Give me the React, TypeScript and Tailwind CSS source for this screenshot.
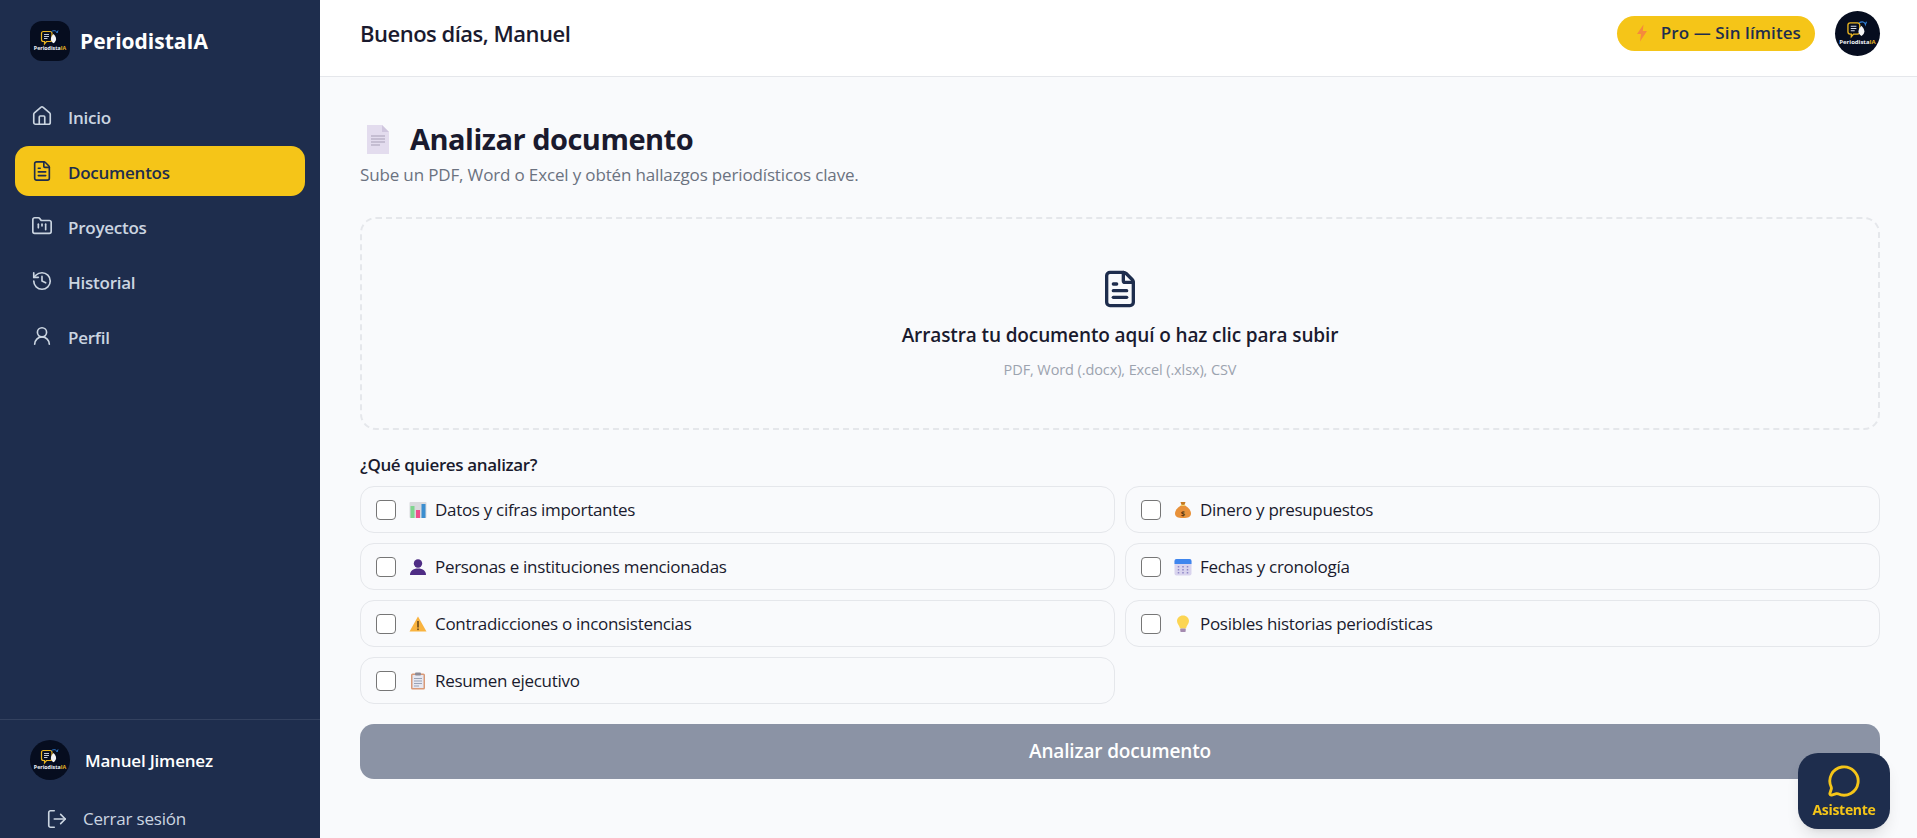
import React from 'react';
import { House, FileText, FolderKanban, History, UserRound, LogOut, MessageCircle } from 'lucide-react';

const navItems = [
  { label: 'Inicio', icon: House },
  { label: 'Documentos', icon: FileText, active: true },
  { label: 'Proyectos', icon: FolderKanban },
  { label: 'Historial', icon: History },
  { label: 'Perfil', icon: UserRound },
];

function Logo({ className }: { className: string }) {
  return (
    <svg viewBox="0 0 40 40" className={className}>
      <path d="M13.500 10.500h6.500a2 2 0 0 1 2 2v6a2 2 0 0 1-2 2h-3.500l-2 2.300v-2.300h-1a2 2 0 0 1-2-2v-6a2 2 0 0 1 2-2z" fill="none" stroke="#e9b521" strokeWidth="1.200" />
      <path d="M14 13.500h5M14 15.500h5M14 17.500h3.500" stroke="#d8dee9" strokeWidth="0.900" />
      <path d="M23.500 13c1.600 1.800 2.600 3.300 2.600 5s-1 3.200-2.600 4.300c-1.600-1.100-2.600-2.600-2.600-4.300s1-3.200 2.600-5z" fill="#f3f4f6" />
      <path d="M21.500 10.500c2.500-1.500 5-1 5.500 1.500l1-2.500" fill="none" stroke="#2f7fd6" strokeWidth="1" />
      <text x="20" y="29" textAnchor="middle" fontSize="5.300" fontWeight="700" fill="#f1f5f9" fontFamily="Open Sans, sans-serif">
        Periodista<tspan fill="#e9b521">IA</tspan>
      </text>
    </svg>
  );
}

function Chart() {
  return (
    <svg viewBox="0 0 18 18" className="w-[18px] h-[18px] shrink-0">
      <rect x="0.500" y="1" width="17" height="16" rx="1" fill="#d9d9dd" />
      <rect x="1.500" y="5" width="4" height="12" fill="#7fd58f" />
      <rect x="7" y="9" width="4" height="8" fill="#ee4f8b" />
      <rect x="12.500" y="3" width="4" height="14" fill="#3b8ed0" />
    </svg>
  );
}

function Bust() {
  return (
    <svg viewBox="0 0 18 18" className="w-[18px] h-[18px] shrink-0">
      <circle cx="9" cy="5.500" r="4.200" fill="#4f2d85" />
      <path d="M1 17c0-4 3-6.500 8-6.500s8 2.500 8 6.500z" fill="#4f2d85" />
    </svg>
  );
}

function Warning() {
  return (
    <svg viewBox="0 0 18 18" className="w-[18px] h-[18px] shrink-0">
      <path d="M9 1.500 17.500 16.500H0.500z" fill="#f9b33f" strokeLinejoin="round" />
      <rect x="8.200" y="6" width="1.600" height="6.500" fill="#6b4a1a" />
      <rect x="8.200" y="13.500" width="1.600" height="1.600" fill="#6b4a1a" />
    </svg>
  );
}

function Clipboard() {
  return (
    <svg viewBox="0 0 18 18" className="w-[18px] h-[18px] shrink-0">
      <rect x="2" y="1.500" width="14" height="16" rx="1.500" fill="#d99a78" />
      <rect x="3.500" y="3" width="11" height="13" fill="#e6e8f2" />
      <rect x="6" y="0.500" width="6" height="3" rx="1" fill="#8e8a94" />
      <path d="M5 6.500h8M5 9h8M5 11.500h8M5 14h5" stroke="#9aa3b5" strokeWidth="1" />
    </svg>
  );
}

function MoneyBag() {
  return (
    <svg viewBox="0 0 18 18" className="w-[18px] h-[18px] shrink-0">
      <path d="M6.500 1h5l-1.200 3.500H7.700z" fill="#c67a22" />
      <path d="M7 4.500h4c3.500 2 6 5 6 8 0 3.200-2.500 4.500-8 4.500s-8-1.300-8-4.500c0-3 2.500-6 6-8z" fill="#e8913a" />
      <rect x="6.800" y="3.800" width="4.400" height="1.200" fill="#f6d06a" />
      <text x="9" y="14.500" textAnchor="middle" fontSize="7.500" fontWeight="700" fill="#5f3a12" fontFamily="Open Sans, sans-serif">$</text>
    </svg>
  );
}

function CalendarEmoji() {
  return (
    <svg viewBox="0 0 18 18" className="w-[18px] h-[18px] shrink-0">
      <rect x="0.500" y="1" width="17" height="16.500" rx="2" fill="#d9d4ee" />
      <path d="M0.500 6V3a2 2 0 0 1 2-2h13a2 2 0 0 1 2 2v3z" fill="#3f86ee" />
      <path d="M4.500 8v8M9 8v8M13.500 8v8" stroke="#8f87c8" strokeWidth="1.500" strokeDasharray="1.500 1.500" />
    </svg>
  );
}

function Bulb() {
  return (
    <svg viewBox="0 0 18 18" className="w-[18px] h-[18px] shrink-0">
      <path d="M9 0.500c3.600 0 6 2.500 6 5.500 0 3-2.600 4.500-3 7.500H6c-.4-3-3-4.500-3-7.500 0-3 2.400-5.500 6-5.500z" fill="#fcd553" />
      <rect x="6.300" y="13.500" width="5.400" height="3.500" rx="0.800" fill="#a58bb0" />
    </svg>
  );
}

function Bolt() {
  return (
    <svg viewBox="0 0 12 18" className="w-[12px] h-[18px] shrink-0">
      <path d="M7.500 0.500 1 10h4l-1 7.500L11 7H6.800z" fill="#f58a3c" />
    </svg>
  );
}

function PageEmoji() {
  return (
    <svg viewBox="0 0 22 29" className="w-[22px] h-[29px] shrink-0">
      <path d="M0 0h15l7 7v22H0z" fill="#e3dcee" />
      <path d="M15 0l7 7h-7z" fill="#cfc6de" />
      <path d="M4 11h14M4 14h14M4 17h14M4 20h9" stroke="#a79fb6" strokeWidth="1" />
    </svg>
  );
}

const options = [
  { label: 'Datos y cifras importantes', icon: <Chart /> },
  { label: 'Dinero y presupuestos', icon: <MoneyBag /> },
  { label: 'Personas e instituciones mencionadas', icon: <Bust /> },
  { label: 'Fechas y cronología', icon: <CalendarEmoji /> },
  { label: 'Contradicciones o inconsistencias', icon: <Warning /> },
  { label: 'Posibles historias periodísticas', icon: <Bulb /> },
  { label: 'Resumen ejecutivo', icon: <Clipboard /> },
];

export default function App() {
  return (
    <div className="flex h-[838px] overflow-hidden bg-[#f9fafc] font-['Open_Sans',sans-serif] text-[#1a1a2e]">
      <aside className="w-[320px] shrink-0 flex flex-col bg-[#1e2d4d]">
        <div className="flex items-center gap-[10px] pl-[30px] h-[82px]">
          <div className="w-[40px] h-[40px] rounded-[12px] bg-[#060d1f] overflow-hidden">
            <Logo className="w-[40px] h-[40px]" />
          </div>
          <span className="pt-[2px] text-[21px] font-bold text-white">PeriodistaIA</span>
        </div>

        <nav className="flex flex-col gap-[5px] px-[15px] pt-[9px]">
          {navItems.map(({ label, icon: Icon, active }) => (
            <div
              key={label}
              className={
                active
                  ? 'flex items-center gap-[15px] h-[50px] pl-[16px] rounded-[14px] bg-[#f5c518] text-[#1e2d4d]'
                  : 'flex items-center gap-[15px] h-[50px] pl-[16px] rounded-[14px] text-[#cbd5e1]'
              }
            >
              <Icon size={22} strokeWidth={1.800} />
              <span className="pt-[3px] text-[17px] font-semibold tracking-[-0.25px]">{label}</span>
            </div>
          ))}
        </nav>

        <div className="mt-auto border-t border-[#33415f] pl-[30px] pt-[20px] h-[119px]">
          <div className="flex items-center gap-[15px]">
            <div className="w-[40px] h-[40px] rounded-full bg-[#060d1f] overflow-hidden">
              <Logo className="w-[40px] h-[40px]" />
            </div>
            <span className="pt-[2px] text-[17px] font-semibold tracking-[-0.2px] text-white">Manuel Jimenez</span>
          </div>
          <div className="flex items-center gap-[15px] pl-[16px] mt-[26px] text-[#cbd5e1]">
            <LogOut size={22} strokeWidth={1.800} />
            <span className="text-[17px] font-medium tracking-[-0.2px]">Cerrar sesión</span>
          </div>
        </div>
      </aside>

      <div className="flex-1 flex flex-col min-w-0">
        <header className="h-[77px] shrink-0 flex items-center justify-between pl-[40px] pr-[37px] pb-[10px] bg-white border-b border-[#e5e7eb]">
          <h2 className="text-[22px] font-semibold tracking-[-0.5px]">Buenos días, Manuel</h2>
          <div className="flex items-center gap-[20px]">
            <div className="flex items-center gap-[13px] h-[35px] pl-[19px] pr-[14px] rounded-full bg-[#f5c518] text-[#1e2d4d]">
              <Bolt />
              <span className="text-[17px] font-semibold tracking-[0.1px]">Pro — Sin límites</span>
            </div>
            <div className="w-[45px] h-[45px] rounded-full bg-[#060d1f] overflow-hidden">
              <Logo className="w-[45px] h-[45px]" />
            </div>
          </div>
        </header>

        <main className="flex-1 pl-[40px] pr-[37px] pt-[47px]">
          <div className="flex items-center gap-[21px] pl-[7px] h-[30px]">
            <PageEmoji />
            <h1 className="text-[29px] font-bold tracking-[-0.5px]">Analizar documento</h1>
          </div>
          <p className="mt-[9px] text-[17px] tracking-[-0.15px] leading-[24px] text-[#6b7280]">
            Sube un PDF, Word o Excel y obtén hallazgos periodísticos clave.
          </p>

          <div className="mt-[30px] h-[213px] flex flex-col items-center rounded-[16px] border-2 border-dashed border-[#e5e7eb] pt-[50px]">
            <FileText size={40} strokeWidth={2} className="text-[#1e2d4d]" />
            <div className="mt-[13px] text-[19px] font-semibold tracking-[-0.12px] leading-[26px]">
              Arrastra tu documento aquí o haz clic para subir
            </div>
            <div className="mt-[12px] text-[14.500px] tracking-[-0.1px] leading-[20px] text-[#9ca3af]">
              PDF, Word (.docx), Excel (.xlsx), CSV
            </div>
          </div>

          <div className="mt-[23px] text-[17px] font-semibold tracking-[-0.35px] leading-[24px]">¿Qué quieres analizar?</div>

          <div className="mt-[9px] grid grid-cols-2 gap-x-[10px] gap-y-[10px]">
            {options.map((o) => (
              <label key={o.label} className="flex items-center h-[47px] pl-[15px] rounded-[14px] border border-[#e5e7eb]">
                <input type="checkbox" className="appearance-none w-[20px] h-[20px] rounded-[4px] border border-[#767676] bg-white" />
                <span className="ml-[13px] mr-[8px]">{o.icon}</span>
                <span className="text-[17px] tracking-[-0.3px]">{o.label}</span>
              </label>
            ))}
          </div>

          <button className="mt-[20px] w-full h-[55px] rounded-[14px] bg-[#8b93a5] text-white text-[19px] font-semibold tracking-[-0.15px]">
            Analizar documento
          </button>
        </main>
      </div>

      <button className="fixed right-[27px] bottom-[9px] w-[92px] h-[76px] flex flex-col items-center justify-center gap-[3px] rounded-[20px] bg-[#1e2d4d] text-[#f5c518] shadow-lg">
        <MessageCircle size={34} strokeWidth={2} />
        <span className="text-[14px] font-bold tracking-[-0.3px] leading-[18px]">Asistente</span>
      </button>
    </div>
  );
}
